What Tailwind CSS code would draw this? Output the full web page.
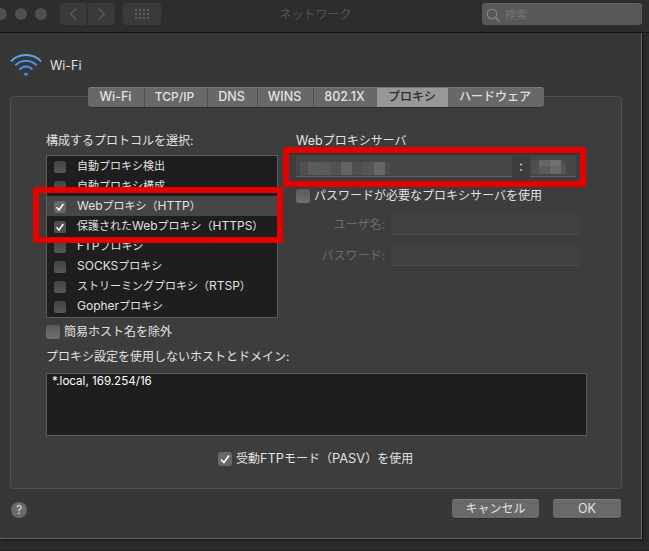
<!DOCTYPE html>
<html lang="ja">
<head>
<meta charset="utf-8">
<title>ネットワーク</title>
<script src="https://cdn.jsdelivr.net/npm/@tailwindcss/browser@4"></script>
</head>
<body class="w-[649px] h-[551px] overflow-hidden bg-[#2d2d2d] font-['Inter','Noto_Sans_CJK_JP',sans-serif] text-[12px] leading-[20px] text-[#e2e2e2] whitespace-nowrap">
<div class="relative w-[649px] h-[551px] overflow-hidden border-b border-[#202020]">
  <!-- Title bar -->
  <header class="h-[33px] border-b border-[#131313] bg-[#2d2d2d] flex items-start relative">
    <div class="flex gap-[8px] -ml-[5px] mt-[8px]">
      <i class="size-[12px] rounded-full bg-[#505050]"></i><i class="size-[12px] rounded-full bg-[#505050]"></i><i class="size-[12px] rounded-full bg-[#505050]"></i>
    </div>
    <div class="flex gap-px ml-[13px] mt-[3px]">
      <div class="w-[27px] h-[22px] rounded-[3px] bg-[#3a3a3a]"><svg class="size-full" viewBox="0 0 27 22" fill="none" stroke="#5c5c5c" stroke-width="1.3"><path d="M16.5 5.5 10.5 11l6 5.5"/></svg></div>
      <div class="w-[27px] h-[22px] rounded-[3px] bg-[#3a3a3a]"><svg class="size-full" viewBox="0 0 27 22" fill="none" stroke="#5c5c5c" stroke-width="1.3"><path d="m10.5 5.500 6 5.500-6 5.500"/></svg></div>
    </div>
    <div class="ml-[8px] mt-[3px] w-[38px] h-[22px] rounded-[3px] bg-[#3a3a3a]"><svg class="size-full" viewBox="0 0 38 22" stroke="#5c5c5c" stroke-width="2" stroke-dasharray="2 2"><path d="M12 7h14M12 11h14M12 15h14"/></svg></div>
    <div class="ml-[118.500px] mt-[5px] text-[#535353]">ネットワーク</div>
    <div class="ml-auto mr-[7px] mt-[3px] w-[160px] h-[22px] rounded-[3px] bg-[#585858] border-t border-[#616161] flex items-center pl-[4px] text-[11px] text-[#747474]">
      <svg class="size-[14px] mr-[5px]" viewBox="0 0 14 14" fill="none" stroke="#8a8a8a" stroke-width="1.1"><circle cx="6" cy="6" r="4.800"/><path d="m9.500 9.500 4 4"/></svg>検索
    </div>
  </header>

  <!-- Sheet -->
  <main class="w-[642px] h-[506px] bg-[#373737] border-r border-b border-[#666] shadow-[1px_1px_0_#161616,2px_2px_6px_#202020] pl-[10px] pr-[19px]">
    <div class="h-[54px] pt-[20px] flex items-start">
      <svg class="w-[32px] h-[24px]" viewBox="0 0 32 24" fill="none" stroke-width="1.800"><path stroke="#57a9ed" d="M.800 8.500C8.500-.200 23.500-.200 31.200 8.500"/><path stroke="#4d9ced" d="M5.300 12.500c5.500-6.300 15.900-6.300 21.400 0"/><path stroke="#448fed" d="M9.500 16.700c3.300-4.300 9.700-4.300 13 0"/><path fill="#3c87ee" d="M13.500 20.800c.8-1.500 4.200-1.500 5 0L16 23.600z"/></svg>
      <span class="ml-[8px] mt-[3px] text-[12.500px]">Wi-Fi</span>
    </div>
    <section class="mt-[9px] w-[612px] h-[393px] border border-[#515151] rounded-[4px] bg-[#3d3d3d] pl-[35px]">
      <nav class="-mt-[10px] ml-[42px] w-[456px] h-[20px] rounded-[3px] bg-[#686868] border-t border-[#7a7a7a] shadow-[0_1px_0_#2c2c2c] flex text-center leading-[18px] font-medium overflow-hidden">
        <div class="w-[57px] pr-px border-r border-[#505050] text-[12.500px]">Wi-Fi</div>
        <div class="w-[63px] pr-[3px] border-r border-[#505050] text-[12px]">TCP/IP</div>
        <div class="w-[50px] pr-[2px] border-r border-[#505050] text-[12.500px]">DNS</div>
        <div class="w-[56px] pr-[2px] border-r border-[#505050] text-[12.500px]">WINS</div>
        <div class="w-[63px] pr-[2px] text-[12.500px]">802.1X</div>
        <div class="w-[71px] pr-px bg-[#989898] text-[#2b2b2b]">プロキシ</div>
        <div class="w-[96px] pr-[2px]">ハードウェア</div>
      </nav>

      <div class="flex">
        <div class="w-[250px] pt-[24px]">
          <div>構成するプロトコルを選択:</div>
          <div class="mt-[4px] w-[232px] h-[163px] border border-[#5c5c5c] bg-[#1e1e1e] text-[11px]">
            <div class="h-[20px] flex items-center gap-[11px] pl-[7px]"><i class="mt-[2px] size-[12px] rounded-[2.500px] bg-linear-to-b from-[#424242] to-[#585858]"></i>自動プロキシ検出</div>
            <div class="h-[20px] flex items-center gap-[11px] pl-[7px]"><i class="mt-[2px] size-[12px] rounded-[2.500px] bg-linear-to-b from-[#424242] to-[#585858]"></i>自動プロキシ構成</div>
            <div class="h-[20px] flex items-center gap-[11px] pl-[7px] bg-[#464646]"><svg class="mt-[2px] size-[12px] rounded-[2.500px] bg-[#686868]" viewBox="0 0 12 12" fill="none" stroke="#fff" stroke-width="1.500"><path d="m2.500 6.300 2.500 2.700 4.300-6"/></svg><p><span class="text-[12px]">Web</span>プロキシ（<span class="text-[12px]">HTTP</span>）</p></div>
            <div class="h-[20px] flex items-center gap-[11px] pl-[7px]"><svg class="mt-[2px] size-[12px] rounded-[2.500px] bg-[#505050]" viewBox="0 0 12 12" fill="none" stroke="#fff" stroke-width="1.500"><path d="m2.500 6.300 2.500 2.700 4.300-6"/></svg><p>保護された<span class="text-[12px]">Web</span>プロキシ（<span class="text-[12px]">HTTPS</span>）</p></div>
            <div class="h-[20px] flex items-center gap-[11px] pl-[7px]"><i class="mt-[2px] size-[12px] rounded-[2.500px] bg-linear-to-b from-[#424242] to-[#585858]"></i><p><span class="text-[12px]">FTP</span>プロキシ</p></div>
            <div class="h-[20px] flex items-center gap-[11px] pl-[7px]"><i class="mt-[2px] size-[12px] rounded-[2.500px] bg-linear-to-b from-[#424242] to-[#585858]"></i><p><span class="text-[12px]">SOCKS</span>プロキシ</p></div>
            <div class="h-[20px] flex items-center gap-[11px] pl-[7px]"><i class="mt-[2px] size-[12px] rounded-[2.500px] bg-linear-to-b from-[#424242] to-[#585858]"></i><p>ストリーミングプロキシ（<span class="text-[12px]">RTSP</span>）</p></div>
            <div class="h-[20px] flex items-center gap-[11px] pl-[7px]"><i class="mt-[2px] size-[12px] rounded-[2.500px] bg-linear-to-b from-[#424242] to-[#585858]"></i><p><span class="text-[12px]">Gopher</span>プロキシ</p></div>
          </div>
          <div class="mt-[4px] h-[20px] flex items-center gap-[4px]"><i class="size-[14px] rounded-[3px] bg-linear-to-b from-[#5a5a5a] to-[#707070]"></i>簡易ホスト名を除外</div>
        </div>
        <div class="pt-[24px]">
          <div class="h-[20px]"><span class="text-[12.500px]">Web</span>プロキシサーバ</div>
          <div class="mt-[5px] flex h-[21px]">
            <div class="w-[216px] bg-[#464646] border-b border-[#606060] pl-[4px] pt-[6px] flex">
              <i class="w-[8px] h-[13px] bg-[#505050]"></i><i class="w-[11px] h-[13px] bg-[#5c5c5c]"></i><i class="w-[11px] h-[13px] bg-[#5a5a5a]"></i><i class="w-[11px] h-[13px] bg-[#525252]"></i><i class="w-[11px] h-[13px] bg-[#646464]"></i><i class="w-[11px] h-[13px] bg-[#4f4f4f]"></i><i class="w-[11px] h-[13px] bg-[#555]"></i><i class="w-[11px] h-[13px] bg-[#666]"></i><i class="w-[5px] h-[13px] bg-[#4c4c4c]"></i>
            </div>
            <div class="w-[18px] text-center text-[14px]">:</div>
            <div class="w-[46px] bg-[#464646] border-b border-[#606060] pl-px pt-[4px]">
              <div class="grid grid-cols-[8px_11px_11px_5px] grid-rows-[6px_8px]"><i class="bg-[#4d4d4d]"></i><i class="bg-[#666]"></i><i class="bg-[#707070]"></i><i class="bg-[#4f4f4f]"></i><i class="bg-[#505050]"></i><i class="bg-[#5a5a5a]"></i><i class="bg-[#686868]"></i><i class="bg-[#555]"></i></div>
            </div>
          </div>
          <div class="mt-[9px] h-[20px] flex items-center gap-[4px]"><i class="size-[14px] rounded-[3px] bg-linear-to-b from-[#5a5a5a] to-[#707070]"></i>パスワードが必要なプロキシサーバを使用</div>
          <div class="mt-[8px] h-[21px] flex gap-[6px] text-[#6c6c6c]"><div class="w-[89px] pt-px text-right">ユーザ名:</div><div class="w-[188px] bg-[#414141] border-b border-[#494949]"></div></div>
          <div class="mt-[10px] h-[21px] flex gap-[6px] text-[#6c6c6c]"><div class="w-[89px] pt-px text-right">パスワード:</div><div class="w-[188px] bg-[#414141] border-b border-[#494949]"></div></div>
        </div>
      </div>

      <div class="mt-[5px]">プロキシ設定を使用しないホストとドメイン:</div>
      <div class="mt-[6px] w-[541px] h-[63px] border border-[#5c5c5c] bg-[#1e1e1e] pl-[5px] leading-[14px] text-[11.600px] text-white">*.local, 169.254/16</div>
      <div class="mt-[13px] ml-[172px] h-[20px] flex items-center gap-[4px]"><svg class="size-[14px] rounded-[3px] bg-[#686868]" viewBox="0 0 14 14" fill="none" stroke="#fff" stroke-width="1.700"><path d="m3 7.500 3 3 5-7"/></svg><p>受動<span class="text-[12.800px]">FTP</span>モード（<span class="text-[12.800px]">PASV</span>）を使用</p></div>
    </section>
    <footer class="flex items-start pt-[10px]">
      <div class="ml-px mt-[3px] size-[16px] rounded-full bg-[#6b6b6b] text-center leading-[16px] text-[12px]">?</div>
      <div class="ml-auto w-[87px] h-[19px] rounded-[3px] bg-[#696969] border-t border-[#7c7c7c] shadow-[0_1px_0_#2c2c2c] text-center leading-[18px]">キャンセル</div>
      <div class="ml-[14px] mr-px w-[68px] h-[19px] rounded-[3px] bg-[#696969] border-t border-[#7c7c7c] shadow-[0_1px_0_#2c2c2c] text-center leading-[18px] text-[12.500px]">OK</div>
    </footer>
  </main>

  <!-- Callout frames -->
  <div class="absolute left-[33px] top-[187px] w-[250px] h-[56px] border-[6px] border-[#e60000] rounded-[2px]"></div>
  <div class="absolute left-[283px] top-[147px] w-[303px] h-[40px] border-[6px] border-[#e60000] rounded-[2px] shadow-[inset_0_1px_0_#303030]"></div>
</div>
</body>
</html>
